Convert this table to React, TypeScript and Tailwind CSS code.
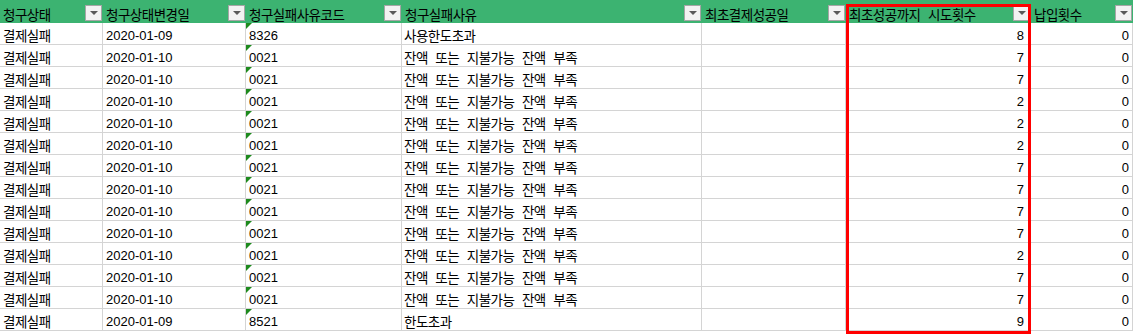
const headers = [
  "청구상태",
  "청구상태변경일",
  "청구실패사유코드",
  "청구실패사유",
  "최초결제성공일",
  "최초성공까지 시도횟수",
  "납입횟수",
];

const tries = [8, 7, 7, 2, 2, 2, 7, 7, 7, 7, 2, 7, 7, 9];

const rows = tries.map((n, i) => {
  const first = i === 0;
  const last = i === tries.length - 1;
  return {
    status: "결제실패",
    date: first || last ? "2020-01-09" : "2020-01-10",
    code: first ? "8326" : last ? "8521" : "0021",
    reason: first ? "사용한도초과" : last ? "한도초과" : "잔액 또는 지불가능 잔액 부족",
    tries: n,
    paid: 0,
  };
});

const cols = "grid grid-cols-[103px_143px_156px_300px_144px_185px_1fr]";
const kr = "[font-family:'Noto_Sans_CJK_KR','Liberation_Sans',sans-serif] text-[13.5px] tracking-[-0.5px] [word-spacing:5px]";
const num = "[font-family:'Liberation_Sans','Noto_Sans_CJK_KR',sans-serif] text-[13px]";
const cell = "h-[22px] border-r border-b border-[#d4d4d4] flex items-end pb-[2px] leading-none text-black overflow-hidden whitespace-nowrap";

const FilterButton = () => (
  <div className="absolute right-px top-[5px] w-[17px] h-[16px] border border-[#a6a6a6] bg-[#f2f2f2] flex items-center justify-center">
    <div className="w-0 h-0 border-l-[4px] border-r-[4px] border-t-[4px] border-l-transparent border-r-transparent border-t-[#595959]" />
  </div>
);

export default function App() {
  return (
    <div className="relative w-[1133px] h-[336px] bg-white overflow-hidden">
      <div className={`${cols} h-[23px] bg-[#3cb371]`}>
        {headers.map((h) => (
          <div key={h} className={`relative flex items-end pb-[2px] pl-[3px] leading-none text-black whitespace-nowrap ${kr}`}>
            {h}
            <FilterButton />
          </div>
        ))}
      </div>

      {rows.map((r, i) => (
        <div key={i} className={cols}>
          <div className={`${cell} ${kr} pl-[3px]`}>{r.status}</div>
          <div className={`${cell} ${num} pl-[3px]`}>{r.date}</div>
          <div className={`${cell} ${num} pl-[3px] relative`}>
            <div className="absolute left-0 top-0 w-0 h-0 border-t-[6px] border-r-[6px] border-t-[#1d8a1d] border-r-transparent" />
            {r.code}
          </div>
          <div className={`${cell} ${kr} pl-[2px]`}>{r.reason}</div>
          <div className={cell} />
          <div className={`${cell} ${num} justify-end pr-[6px]`}>{r.tries}</div>
          <div className={`${cell} ${num} justify-end pr-[3px]`}>{r.paid}</div>
        </div>
      ))}

      <div className="absolute left-[846px] top-[4px] w-[185px] h-[330px] border-[3px] border-[#ff0000] pointer-events-none" />
    </div>
  );
}
